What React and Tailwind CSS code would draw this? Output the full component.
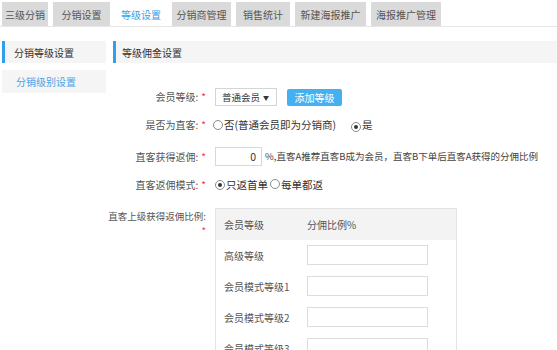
const tabs = ['三级分销', '分销设置', '等级设置', '分销商管理', '销售统计', '新建海报推广', '海报推广管理'];
const tabWidths = ['w-[46px]', 'w-[57px]', 'w-[52px]', 'w-[59px]', 'w-[54px]', 'w-[71px]', 'w-[70px]'];
const levels = ['高级等级', '会员模式等级1', '会员模式等级2', '会员模式等级3', '会员模式等级4'];

function Radio({ checked }) {
  return (
    <span className="inline-flex h-[10px] w-[10px] shrink-0 items-center justify-center rounded-full border border-[#8a8a8a] bg-white">
      {checked && <span className="h-[4px] w-[4px] rounded-full bg-[#333]" />}
    </span>
  );
}

function Label({ children }) {
  return (
    <div className="w-[98px] shrink-0 text-right text-[10px] leading-[14px] text-[#555]">
      {children}
      <span className="ml-[3px] text-[#e33]">*</span>
    </div>
  );
}

function SectionHead({ title, className = '' }) {
  return (
    <div className={`flex h-[22px] items-center border-l-[3px] border-[#2ea0ec] bg-[#f5f5f5] text-[10px] text-[#333] ${className}`}>
      {title}
    </div>
  );
}

export default function App() {
  return (
    <div className="h-[350px] w-[557px] overflow-hidden bg-white" style={{ fontFamily: '"Noto Sans CJK SC", "Noto Sans", sans-serif' }}>
      {/* tabs */}
      <div className="flex h-[27px] gap-[5px] border-b border-[#e6e6e6] pl-[2px] pt-[2px]">
        {tabs.map((t, i) => (
          <div
            key={t}
            className={`flex h-[24px] items-center justify-center text-[10px] ${tabWidths[i]} ${i === 2 ? 'bg-white text-[#3ba0e8]' : 'bg-[#dadada] text-[#555]'}`}
          >
            {t}
          </div>
        ))}
      </div>

      <div className="flex pl-[2px] pt-[14px]">
        {/* sidebar */}
        <div className="w-[104px] shrink-0">
          <SectionHead title="分销等级设置" className="pl-[9px]" />
          <div className="mt-[7px] flex h-[23px] items-center bg-[#f5f5f5] pl-[14px] text-[10px] text-[#4aa3e8]">分销级别设置</div>
        </div>

        {/* main */}
        <div className="ml-[7px] flex-1">
          <SectionHead title="等级佣金设置" className="pl-[6px]" />

          <div className="-ml-[5px] text-[10px] text-[#333]">
            <div className="mt-[25px] flex h-[18px] items-center gap-[7px]">
              <Label>会员等级:</Label>
              <div className="ml-[2px] flex h-[18px] w-[62px] items-center justify-between border border-[#d5d5d5] bg-white pl-[6px] pr-[7px]">
                <span className="text-[9.5px]">普通会员</span>
                <span className="text-[6px]">▼</span>
              </div>
              <div className="ml-[3px] flex h-[17px] w-[55px] items-center justify-center rounded-[2px] bg-[#45b0f0] text-[10px] text-white">添加等级</div>
            </div>

            <div className="mt-[11px] flex h-[16px] items-center gap-[7px]">
              <Label>是否为直客:</Label>
              <div className="flex items-center text-[10.5px]">
                <Radio />
                <span className="ml-[1px]">否(普通会员即为分销商)</span>
                <span className="ml-[15px]"><Radio checked /></span>
                <span className="ml-[1px]">是</span>
              </div>
            </div>

            <div className="mt-[14px] flex h-[19px] items-center gap-[7px]">
              <Label>直客获得返佣:</Label>
              <div className="ml-[2px] flex h-[19px] w-[47px] items-center justify-end border border-[#d8d8d8] pr-[5px] text-[10.5px]">0</div>
              <span className="-ml-[4px] text-[9.5px] text-[#444]">%,直客A推荐直客B成为会员，直客B下单后直客A获得的分佣比例</span>
            </div>

            <div className="mt-[11px] flex h-[16px] items-center gap-[7px]">
              <Label>直客返佣模式:</Label>
              <div className="ml-[2px] flex items-center text-[10.5px]">
                <Radio checked />
                <span className="ml-[1px]">只返首单</span>
                <span className="ml-[2px]"><Radio /></span>
                <span className="ml-[1px]">每单都返</span>
              </div>
            </div>

            <div className="mt-[15px] flex items-start gap-[7px]">
              <div className="flex w-[98px] shrink-0 flex-col items-end pt-[1px] text-[9.5px] leading-[15px] whitespace-nowrap text-[#555]">
                <span>直客上级获得返佣比例:</span>
                <span className="text-[#e33]">*</span>
              </div>
              <div className="ml-[2px] w-[242px] border border-[#e3e3e3]">
                <div className="flex h-[31px] items-center bg-[#f3f3f3] text-[10px] text-[#555]">
                  <span className="w-[91px] pl-[8px]">会员等级</span>
                  <span>分佣比例%</span>
                </div>
                <div className="flex flex-col gap-[11px] pt-[5px] pb-[10px]">
                  {levels.map((l) => (
                    <div key={l} className="flex h-[20px] items-center text-[10px] text-[#555]">
                      <span className="w-[91px] pl-[8px]">{l}</span>
                      <div className="h-[20px] w-[121px] border border-[#dcdcdc] bg-white" />
                    </div>
                  ))}
                </div>
              </div>
            </div>
          </div>
        </div>
      </div>
    </div>
  );
}
